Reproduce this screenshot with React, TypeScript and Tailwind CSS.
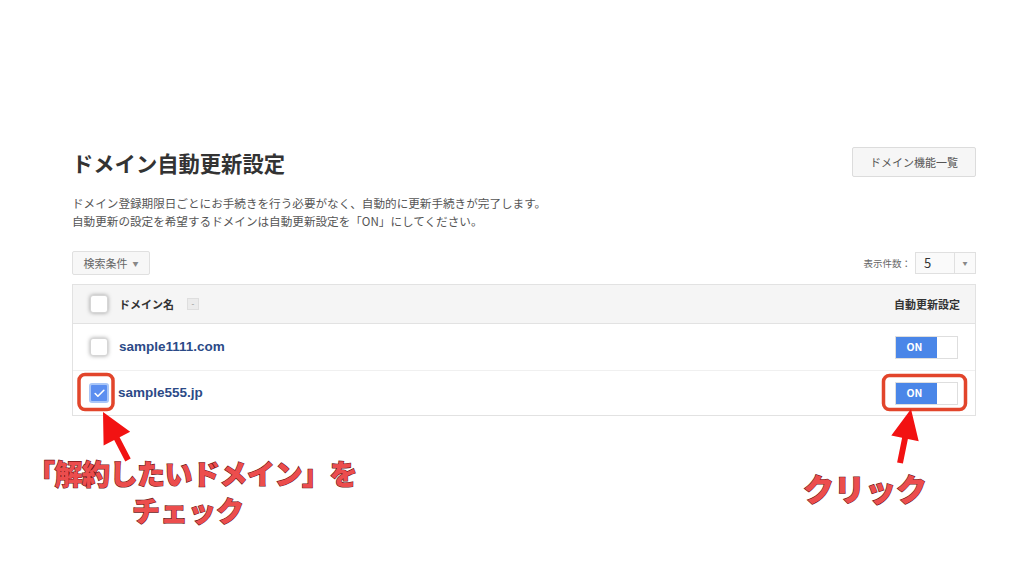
import { Check } from 'lucide-react';

// チェックボックス
const Checkbox = ({ checked = false }: { checked?: boolean }) =>
  checked ? (
    <span className="flex h-[20px] w-[20px] items-center justify-center rounded-[3px] border-2 border-[#a9c6f7] bg-[#5b8ef0]">
      <Check className="h-[13px] w-[13px] text-white" strokeWidth={3} />
    </span>
  ) : (
    <span className="block h-[18px] w-[18px] rounded-[3px] border border-[#d6d6d6] bg-white shadow-[0_0_4px_rgba(0,0,0,0.35)]" />
  );

// ON/OFF トグル
const Toggle = () => (
  <div className="flex h-[23px] w-[63px] border border-[#dedede] bg-white">
    <div className="flex w-[41px] items-center justify-center pr-[4px] bg-[#4a86e8] text-[10.5px] font-bold text-white">ON</div>
  </div>
);

const rows = [
  { name: 'sample1111.com', checked: false, h: 'h-[47px] border-b border-[#f0f0f0]' },
  { name: 'sample555.jp', checked: true, h: 'h-[44px]' },
];

const annotation =
  "font-['Noto_Sans_CJK_JP',sans-serif] font-black text-[#ec4d4d] [-webkit-text-stroke:1.2px_#6b1616] [paint-order:stroke_fill]";

function App() {
  return (
    <div className="relative h-[576px] w-[1024px] overflow-hidden bg-white font-['Noto_Sans_CJK_JP',sans-serif] text-[#333]">
      <div className="pl-[72px] pr-[48px] pt-[147px]">
        {/* 見出し */}
        <div className="flex items-center justify-between">
          <h1 className="text-[21.3px] font-bold leading-[29px] text-[#333]">ドメイン自動更新設定</h1>
          <button className="h-[30px] w-[124px] rounded-[2px] border border-[#dcdcdc] bg-[#f6f6f6] text-[11px] text-[#555]">
            ドメイン機能一覧
          </button>
        </div>

        <div className="mt-[17px] text-[11.6px] leading-[18px] text-[#555]">
          <p>ドメイン登録期限日ごとにお手続きを行う必要がなく、自動的に更新手続きが完了します。</p>
          <p>自動更新の設定を希望するドメインは自動更新設定を「ON」にしてください。</p>
        </div>

        {/* ツールバー */}
        <div className="mt-[21px] flex items-center justify-between">
          <button className="flex h-[24px] w-[78px] items-center justify-center gap-[5px] rounded-[2px] border border-[#e0e0e0] bg-[#f7f7f7] text-[11px] text-[#666]">
            検索条件<span className="text-[6px] text-[#888]">▼</span>
          </button>
          <div className="flex items-center gap-[4px]">
            <span className="text-[9.5px] text-[#666]">表示件数：</span>
            <div className="flex h-[22px] w-[61px] border border-[#e0e0e0] bg-[#fafafa]">
              <span className="flex-1 pl-[8px] text-[13px] leading-[20px] text-[#333]">5</span>
              <span className="flex w-[21px] items-center justify-center border-l border-[#e0e0e0] text-[5px] text-[#888]">▼</span>
            </div>
          </div>
        </div>

        {/* テーブル */}
        <div className="mt-[9px] border border-[#e2e2e2]">
          <div className="flex h-[39px] items-center justify-between border-b border-[#e2e2e2] bg-[#f5f5f5] pl-[17px] pr-[15px]">
            <div className="flex items-center">
              <Checkbox />
              <span className="ml-[11px] text-[11px] font-bold text-[#333]">ドメイン名</span>
              <span className="ml-[13px] flex h-[12px] w-[12px] items-center justify-center border border-[#dedede] bg-[#ebebeb] text-[8px] leading-none text-[#888]">-</span>
            </div>
            <span className="text-[11px] font-bold text-[#333]">自動更新設定</span>
          </div>
          {rows.map((r) => (
            <div key={r.name} className={`flex items-center justify-between pl-[17px] pr-[17px] ${r.h}`}>
              <div className="flex items-center">
                <span className={r.checked ? 'ml-[-1px]' : ''}>
                  <Checkbox checked={r.checked} />
                </span>
                <span className={`${r.checked ? 'ml-[9px]' : 'ml-[11px]'} font-['Liberation_Sans',sans-serif] text-[13.5px] font-bold text-[#2b4a87]`}>
                  {r.name}
                </span>
              </div>
              <Toggle />
            </div>
          ))}
        </div>
      </div>

      {/* 注釈 */}
      <svg className="pointer-events-none absolute left-0 top-0" width="1024" height="576">
        <rect x="79" y="374.5" width="34" height="35" rx="6" fill="none" stroke="#e2452b" strokeWidth="3.5" />
        <rect x="883.5" y="375.5" width="82" height="34" rx="6" fill="none" stroke="#e2452b" strokeWidth="3.5" />
        <polygon
          fill="#f21212"
          points="103,412 130.2,431.7 119.6,437.2 130.7,458.6 125.3,461.4 114.2,440 103.6,445.5"
        />
        <polygon
          fill="#f21212"
          points="911,409 918.7,441.2 907.9,439 902.9,463.6 897.1,462.4 902.1,437.8 891.3,435.6"
        />
      </svg>
      <div className={`absolute left-[22px] top-[455px] w-[340px] text-center text-[28px] leading-[37px] ${annotation}`}>
        <p className="tracking-[-0.5px]">「解約したいドメイン」を</p>
        <p className="mx-auto w-fit pr-[8px]">チェック</p>
      </div>
      <div className={`absolute left-[803px] top-[469px] text-[31px] leading-[38px] ${annotation}`}>クリック</div>
    </div>
  );
}

export default App;
